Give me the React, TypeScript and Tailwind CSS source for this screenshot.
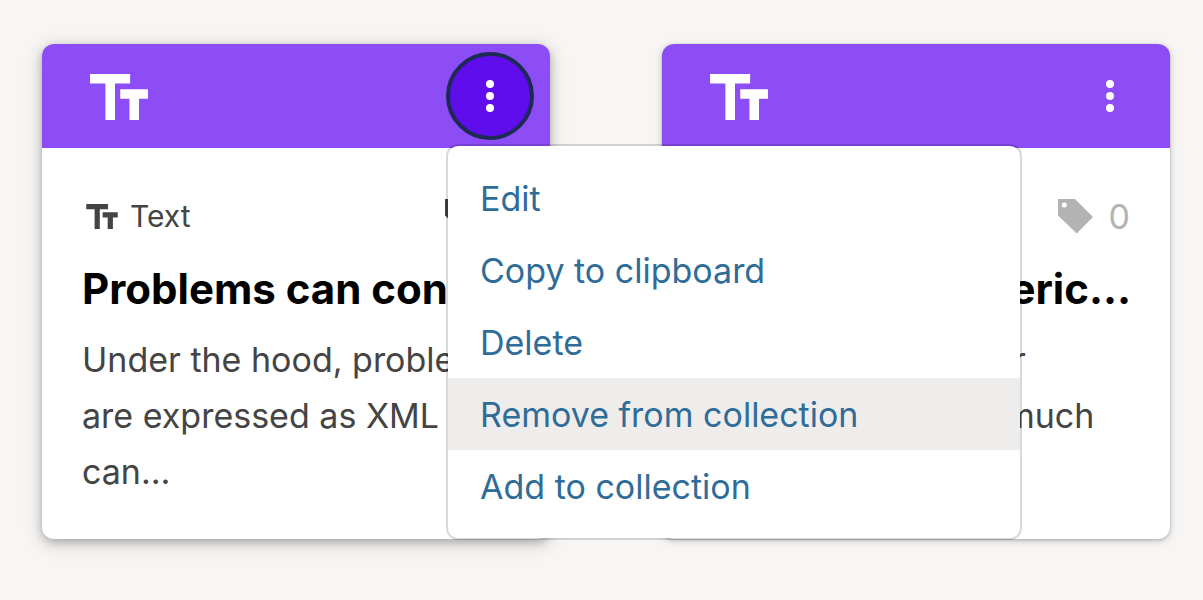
import { ReactNode } from "react";

function TextIcon({ className }: { className: string }) {
  return (
    <svg viewBox="0 0 58.5 46.5" fill="currentColor" aria-hidden="true" className={className}>
      <path d="M0 0H40.5V9.6H25.2V46.5H15.5V9.6H0Z" />
      <path d="M30.5 15.3H58.5V25H49.5V46.5H39.8V25H30.5Z" />
    </svg>
  );
}

function TagIcon() {
  return (
    <svg viewBox="0 0 35 35" fill="currentColor" aria-hidden="true" className="size-[35px]">
      <path
        fillRule="evenodd"
        d="M0 0H17L35 18L18.7 34.5L0 16.5ZM6.2 3.6A2.5 2.5 0 1 0 6.2 8.6A2.5 2.5 0 1 0 6.2 3.6Z"
      />
    </svg>
  );
}

function Dots() {
  return (
    <svg viewBox="0 0 8 32" fill="currentColor" aria-hidden="true" className="h-8 w-2">
      <circle cx="4" cy="4" r="4" />
      <circle cx="4" cy="16" r="4" />
      <circle cx="4" cy="28" r="4" />
    </svg>
  );
}

const actions = ["Edit", "Copy to clipboard", "Delete", "Remove from collection", "Add to collection"];

function Menu() {
  return (
    <ul
      role="menu"
      className="absolute top-full left-0 z-10 mt-1 w-[576px] rounded-xl border-2 border-black/15 bg-white bg-clip-padding py-4"
    >
      {actions.map((action) => (
        <li key={action} role="none">
          <button
            type="button"
            role="menuitem"
            className={
              action === "Remove from collection"
                ? "block w-full bg-[#efedec] px-8 pt-0.5 text-left text-[34px] leading-[70px] text-[#306c98]"
                : "block w-full px-8 pt-0.5 text-left text-[34px] leading-[70px] text-[#306c98]"
            }
          >
            {action}
          </button>
        </li>
      ))}
    </ul>
  );
}

type CardProps = {
  title: string;
  tags: number;
  open?: boolean;
  children: ReactNode;
};

function Card({ title, tags, open = false, children }: CardProps) {
  return (
    <article
      className={
        open
          ? "relative z-10 min-w-0 rounded-xl bg-white shadow-[0_4px_20px_rgba(0,0,0,0.18),0_3px_8px_rgba(0,0,0,0.22)]"
          : "min-w-0 rounded-xl bg-white shadow-[0_2px_8px_rgba(0,0,0,0.18),0_1px_3px_rgba(0,0,0,0.2)]"
      }
    >
      <header className="flex h-[104px] items-center justify-between rounded-t-xl bg-[#8c4cf6] pr-4 pl-12 text-white">
        <TextIcon className="mt-0.5 h-[46px] w-[58px]" />
        <div className="relative">
          <button
            type="button"
            aria-label="Actions"
            aria-expanded={open}
            className={
              open
                ? "flex size-[88px] items-center justify-center rounded-full border-4 border-[#1b2b53] bg-[#600dee]"
                : "flex size-[88px] items-center justify-center rounded-full"
            }
          >
            <Dots />
          </button>
          {open && <Menu />}
        </div>
      </header>
      <div className="px-10 pt-10 pb-[39px] text-[#444]">
        <div className="flex h-14 items-center justify-between">
          <div className="flex items-center gap-3 pl-1 text-[30px]">
            <TextIcon className="h-[25px] w-8" />
            <span>Text</span>
          </div>
          <div className={tags > 0 ? "flex items-center gap-4 text-[34px]" : "flex items-center gap-4 text-[34px] text-[#b3b3b3]"}>
            <TagIcon />
            <span>{tags}</span>
          </div>
        </div>
        <h2 className="mt-4 text-[42px] leading-[58px] font-bold whitespace-nowrap text-black">{title}</h2>
        <p className="mt-[14px] h-[168px] text-[34px] leading-[56px] whitespace-nowrap">{children}</p>
      </div>
    </article>
  );
}

export default function App() {
  return (
    <main className="min-h-screen bg-[#f7f6f4] pt-11 pr-[33px] pl-[42px] font-['Inter','Liberation_Sans',sans-serif]">
      <div className="grid grid-cols-2 gap-28">
        <Card title="Problems can cont…" tags={1} open>
          Under the hood, problems
          <br />
          are expressed as XML and
          <br />
          can…
        </Card>
        <Card title="Problems: numeric…" tags={0}>
          Students must enter
          <br />
          an expression and much
        </Card>
      </div>
    </main>
  );
}
